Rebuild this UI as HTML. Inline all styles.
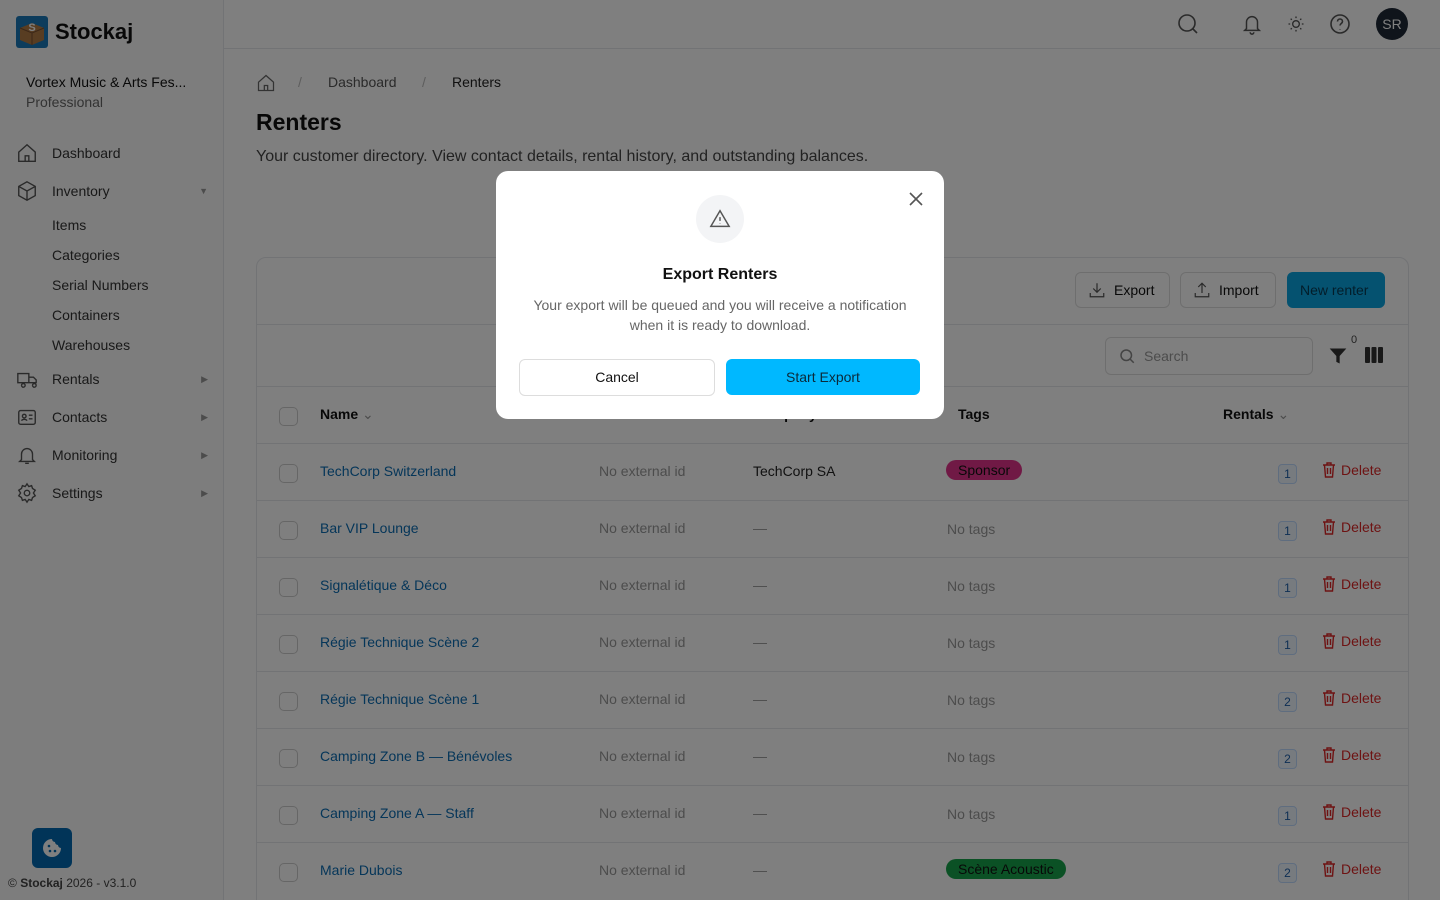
<!DOCTYPE html>
<html><head><meta charset="utf-8"><style>
*{box-sizing:border-box;margin:0;padding:0}
html{width:1440px;height:900px;overflow:hidden}
body{width:1440px;height:900px;overflow:hidden;font-family:"Liberation Sans",sans-serif;background:#fff;color:#111;position:relative;font-size:14px}
.sb{position:absolute;left:0;top:0;width:224px;height:900px;background:#fafafa;border-right:1px solid #e5e7eb}
.logo{position:absolute;left:16px;top:16px;display:flex;align-items:center;gap:7px;font-weight:bold;font-size:22px}
.org{position:absolute;left:26px;top:72px;font-size:14px;line-height:20px}
.org div:last-child{color:#666}
.nav{position:absolute;left:16px;width:192px;display:flex;align-items:center;font-size:14px;color:#333}
.nav svg{width:22px;height:22px;margin-right:14px;stroke:#555;fill:none;stroke-width:1.5}
.nav .ar{margin-left:auto;font-size:9px;color:#999}
.sub{position:absolute;left:52px;font-size:14px;color:#333}
.top{position:absolute;left:224px;top:0;right:0;height:49px;border-bottom:1px solid #e5e7eb}
.ic{position:absolute;top:12px;stroke:#555;fill:none;stroke-width:1.6}
.av{position:absolute;top:8px;width:32px;height:32px;border-radius:50%;background:#1f2937;color:#fff;font-size:14px;text-align:center;line-height:32px}
.card{position:absolute;left:256px;top:257px;width:1153px;height:660px;border:1px solid #e5e7eb;border-radius:10px;overflow:hidden}
.btn{position:absolute;height:36px;border:1px solid #ddd;border-radius:6px;font-size:14px;display:flex;align-items:center;gap:8px;padding:0 12px}
.hl{position:absolute;left:0;right:0;height:1px;background:#e5e7eb}
.cb{position:absolute;left:22px;width:19px;height:19px;border:1px solid #ccc;border-radius:5px;background:#fff}
.row{position:absolute;left:0;right:0;height:57px;border-top:1px solid #e5e7eb}
.row span,.row div{position:absolute}
.nm{left:63px;top:19px;color:#0b6cb3}
.ex{left:342px;top:19px;color:#999}
.co{left:496px;top:19px;color:#222}
.tg{left:690px;top:20px;color:#999}
.pill{left:689px;top:16px;padding:2px 12px;border-radius:12px;color:#111}
.bd{left:1021px;top:20px;width:19px;height:20px;border:1px solid #bfdbfe;background:#eff6ff;border-radius:4px;color:#1e5fa8;font-size:12px;text-align:center;line-height:18px}
.dl{left:1065px;top:18px;color:#dc2626;display:flex;align-items:center;gap:5px}
.ov{position:absolute;left:0;top:0;width:1440px;height:900px;background:rgba(0,0,0,.5)}
.md{position:absolute;left:496px;top:171px;width:448px;height:248px;background:#fff;border-radius:12px;text-align:center}
</style></head><body>
<div class="sb">
 <div class="logo"><svg width="32" height="32" viewBox="0 0 32 32"><rect width="32" height="32" rx="3" fill="#1a79b8"/><path d="M4 12l12-5 12 5v12l-12 5-12-5z" fill="#b07a45"/><path d="M4 12l12 5 12-5M16 17v12" stroke="#7a5030" stroke-width="1" fill="none"/><text x="16" y="15" font-size="11" font-weight="bold" fill="#fff" text-anchor="middle" font-family="Liberation Sans">S</text></svg>Stockaj</div>
 <div class="org"><div>Vortex Music &amp; Arts Fes...</div><div>Professional</div></div>
 <div class="nav" style="top:142px"><svg viewBox="0 0 24 24"><path d="M3 11l9-8 9 8v10H3z M10 21v-6h4v6"/></svg>Dashboard</div>
 <div class="nav" style="top:180px"><svg viewBox="0 0 24 24"><path d="M12 2l9 5v10l-9 5-9-5V7z M3 7l9 5 9-5 M12 12v10"/></svg>Inventory<span class="ar">▼</span></div>
 <div class="sub" style="top:217px">Items</div>
 <div class="sub" style="top:247px">Categories</div>
 <div class="sub" style="top:277px">Serial Numbers</div>
 <div class="sub" style="top:307px">Containers</div>
 <div class="sub" style="top:337px">Warehouses</div>
 <div class="nav" style="top:368px"><svg viewBox="0 0 24 24"><path d="M2 6h12v10H2z M14 10h5l3 3v3h-8 M6 19a2 2 0 100-.1 M18 19a2 2 0 100-.1"/></svg>Rentals<span class="ar">▶</span></div>
 <div class="nav" style="top:406px"><svg viewBox="0 0 24 24"><rect x="3" y="5" width="18" height="15" rx="2"/><circle cx="9" cy="11" r="2"/><path d="M6 16c1-2 5-2 6 0 M14 10h4 M14 14h4"/></svg>Contacts<span class="ar">▶</span></div>
 <div class="nav" style="top:444px"><svg viewBox="0 0 24 24"><path d="M6 17V11a6 6 0 0112 0v6l2 2H4z M10 21h4"/></svg>Monitoring<span class="ar">▶</span></div>
 <div class="nav" style="top:482px"><svg viewBox="0 0 24 24"><circle cx="12" cy="12" r="3"/><path d="M12 2l2 3 3-1 1 3 3 2-2 3 2 3-3 2-1 3-3-1-2 3-2-3-3 1-1-3-3-2 2-3-2-3 3-2 1-3 3 1z"/></svg>Settings<span class="ar">▶</span></div>
 <div style="position:absolute;left:32px;top:828px;width:40px;height:40px;background:#0369b1;border-radius:6px"><svg style="position:absolute;left:10px;top:10px" width="20" height="20" viewBox="0 0 20 20"><path d="M10 1a9 9 0 109 9 3 3 0 01-3-3 3 3 0 01-3-3 3 3 0 01-3-3z" fill="#fff"/><circle cx="7" cy="8" r="1.3" fill="#0369b1"/><circle cx="8" cy="13" r="1.3" fill="#0369b1"/><circle cx="13" cy="13" r="1.3" fill="#0369b1"/></svg></div>
 <div style="position:absolute;left:8px;top:876px;font-size:12px;color:#444">© <b>Stockaj</b> 2026 - v3.1.0</div>
</div>
<div class="top">
 <svg class="ic" style="left:952px" width="24" height="24" viewBox="0 0 24 24"><circle cx="11" cy="11" r="8"/><path d="M17 17l4 4"/></svg>
 <svg class="ic" style="left:1017px" width="22" height="24" viewBox="0 0 24 24"><path d="M6 17V10a6 6 0 0112 0v7l2 2H4z M10 21a2 2 0 004 0"/></svg>
 <svg class="ic" style="left:1062px" width="20" height="24" viewBox="0 0 24 24"><circle cx="12" cy="12" r="4"/><path d="M12 3v2M12 19v2M3 12h2M19 12h2M5.6 5.6l1.4 1.4M17 17l1.4 1.4M5.6 18.4L7 17M17 7l1.4-1.4"/></svg>
 <svg class="ic" style="left:1104px" width="24" height="24" viewBox="0 0 24 24"><circle cx="12" cy="12" r="9"/><path d="M9.5 9.5a2.5 2.5 0 115 0c0 2-2.5 2-2.5 4M12 17v.5"/></svg>
 <div class="av" style="left:1152px">SR</div>
</div>
<svg style="position:absolute;left:256px;top:73px" width="20" height="20" viewBox="0 0 24 24" fill="none" stroke="#666" stroke-width="1.5"><path d="M3 11l9-8 9 8v10H3z M10 21v-6h4v6"/></svg>
<div style="position:absolute;left:298px;top:74px;font-size:14px;color:#bbb">/</div>
<div style="position:absolute;left:328px;top:74px;font-size:14px;color:#555">Dashboard</div>
<div style="position:absolute;left:422px;top:74px;font-size:14px;color:#bbb">/</div>
<div style="position:absolute;left:452px;top:74px;font-size:14px;color:#222">Renters</div>
<div style="position:absolute;left:256px;top:109px;font-size:23px;font-weight:bold">Renters</div>
<div style="position:absolute;left:256px;top:148px;font-size:16px;color:#444">Your customer directory. View contact details, rental history, and outstanding balances.</div>
<div class="card">
 <div class="btn" style="left:818px;top:14px;width:95px"><svg width="18" height="18" viewBox="0 0 24 24" fill="none" stroke="#555" stroke-width="1.6"><path d="M12 3v12M7 10l5 5 5-5M3 16v5h18v-5"/></svg>Export</div>
 <div class="btn" style="left:923px;top:14px;width:96px"><svg width="18" height="18" viewBox="0 0 24 24" fill="none" stroke="#555" stroke-width="1.6"><path d="M12 16V3M7 8l5-5 5 5M3 16v5h18v-5"/></svg>Import</div>
 <div class="btn" style="left:1030px;top:14px;width:98px;background:#0ba5e0;border-color:#0ba5e0;color:#063a55">New renter</div>
 <div class="hl" style="top:66px"></div>
 <div class="btn" style="left:848px;top:79px;width:208px;height:38px;color:#999"><svg width="18" height="18" viewBox="0 0 24 24" fill="none" stroke="#888" stroke-width="2"><circle cx="11" cy="11" r="7"/><path d="M16 16l5 5"/></svg>Search</div>
 <svg style="position:absolute;left:1071px;top:88px" width="20" height="20" viewBox="0 0 24 24" fill="#333"><path d="M2 3h20l-8 9v9l-4-2v-7z"/></svg>
 <div style="position:absolute;left:1094px;top:76px;font-size:11px;color:#444">0</div>
 <svg style="position:absolute;left:1108px;top:89px" width="18" height="16" viewBox="0 0 18 16" fill="#333"><rect x="0" y="0" width="5" height="16" rx="1"/><rect x="6.5" y="0" width="5" height="16" rx="1"/><rect x="13" y="0" width="5" height="16" rx="1"/></svg>
 <div class="hl" style="top:128px"></div>
 <div class="cb" style="top:149px"></div>
 <div style="position:absolute;left:63px;top:148px;font-weight:bold">Name <span style="color:#999;font-weight:normal">⌄</span></div>
 <div style="position:absolute;left:496px;top:148px;font-weight:bold">Company</div>
 <div style="position:absolute;left:701px;top:148px;font-weight:bold">Tags</div>
 <div style="position:absolute;left:966px;top:148px;font-weight:bold">Rentals <span style="color:#999;font-weight:normal">⌄</span></div>
 <div class="row" style="top:185px"><div class="cb" style="top:20px"></div><span class="nm">TechCorp Switzerland</span><span class="ex">No external id</span><span class="co">TechCorp SA</span><span class="pill" style="background:#e0338a">Sponsor</span><span class="bd">1</span><span class="dl">TRASH Delete</span></div>
 <div class="row" style="top:242px"><div class="cb" style="top:20px"></div><span class="nm">Bar VIP Lounge</span><span class="ex">No external id</span><span class="co" style="color:#999">—</span><span class="tg">No tags</span><span class="bd">1</span><span class="dl">TRASH Delete</span></div>
 <div class="row" style="top:299px"><div class="cb" style="top:20px"></div><span class="nm">Signalétique &amp; Déco</span><span class="ex">No external id</span><span class="co" style="color:#999">—</span><span class="tg">No tags</span><span class="bd">1</span><span class="dl">TRASH Delete</span></div>
 <div class="row" style="top:356px"><div class="cb" style="top:20px"></div><span class="nm">Régie Technique Scène 2</span><span class="ex">No external id</span><span class="co" style="color:#999">—</span><span class="tg">No tags</span><span class="bd">1</span><span class="dl">TRASH Delete</span></div>
 <div class="row" style="top:413px"><div class="cb" style="top:20px"></div><span class="nm">Régie Technique Scène 1</span><span class="ex">No external id</span><span class="co" style="color:#999">—</span><span class="tg">No tags</span><span class="bd">2</span><span class="dl">TRASH Delete</span></div>
 <div class="row" style="top:470px"><div class="cb" style="top:20px"></div><span class="nm">Camping Zone B — Bénévoles</span><span class="ex">No external id</span><span class="co" style="color:#999">—</span><span class="tg">No tags</span><span class="bd">2</span><span class="dl">TRASH Delete</span></div>
 <div class="row" style="top:527px"><div class="cb" style="top:20px"></div><span class="nm">Camping Zone A — Staff</span><span class="ex">No external id</span><span class="co" style="color:#999">—</span><span class="tg">No tags</span><span class="bd">1</span><span class="dl">TRASH Delete</span></div>
 <div class="row" style="top:584px"><div class="cb" style="top:20px"></div><span class="nm">Marie Dubois</span><span class="ex">No external id</span><span class="co" style="color:#999">—</span><span class="pill" style="background:#16a34a">Scène Acoustic</span><span class="bd">2</span><span class="dl">TRASH Delete</span></div>
</div>
<div class="ov"></div>
<div class="md">
 <svg style="position:absolute;right:20px;top:20px" width="16" height="16" viewBox="0 0 16 16" stroke="#555" stroke-width="1.6"><path d="M2 2l12 12M14 2L2 14"/></svg>
 <div style="position:absolute;left:200px;top:24px;width:48px;height:48px;border-radius:50%;background:#f3f4f6"><svg style="margin-top:13px" width="22" height="22" viewBox="0 0 24 24" fill="none" stroke="#555" stroke-width="1.6"><path d="M12 3L2 20h20z M12 10v4 M12 17v.5"/></svg></div>
 <div style="position:absolute;left:0;right:0;top:95px;font-size:16px;font-weight:bold">Export Renters</div>
 <div style="position:absolute;left:20px;right:20px;top:124px;font-size:14px;line-height:20px;color:#666">Your export will be queued and you will receive a notification when it is ready to download.</div>
 <div style="position:absolute;left:23px;top:188px;width:196px;height:37px;border:1px solid #ddd;border-radius:6px;line-height:35px;font-size:14px">Cancel</div>
 <div style="position:absolute;left:230px;top:188px;width:194px;height:36px;background:#00b8ff;border-radius:6px;line-height:36px;font-size:14px;color:#0b2a3a">Start Export</div>
</div>
<script>
document.querySelectorAll('.dl').forEach(function(e){e.innerHTML='<svg width="14" height="16" viewBox="0 0 14 16" fill="none" stroke="#dc2626" stroke-width="1.4"><path d="M1 3h12M5 3V1h4v2M2.5 3l1 12h7l1-12M5.5 6v6M8.5 6v6"/></svg>Delete';});
</script>
</body></html>
